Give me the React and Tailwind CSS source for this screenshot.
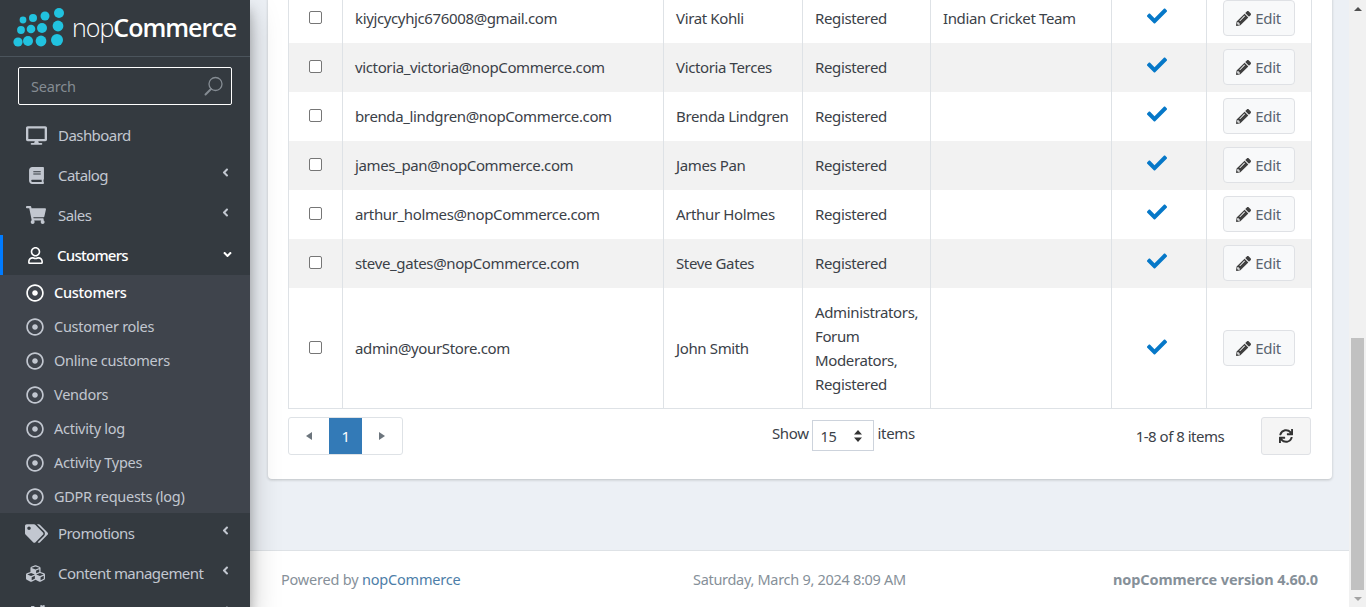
import {
  FaDesktop,
  FaBook,
  FaShoppingCart,
  FaRegUser,
  FaTags,
  FaCubes,
  FaCogs,
  FaAngleLeft,
  FaAngleDown,
  FaCheck,
  FaPencilAlt,
  FaSync,
  FaRegDotCircle,
} from "react-icons/fa";

const font = { fontFamily: '"Noto Sans", sans-serif' };

const customers = [
  { email: "kiyjcycyhjc676008@gmail.com", name: "Virat Kohli", roles: ["Registered"], company: "Indian Cricket Team" },
  { email: "victoria_victoria@nopCommerce.com", name: "Victoria Terces", roles: ["Registered"] },
  { email: "brenda_lindgren@nopCommerce.com", name: "Brenda Lindgren", roles: ["Registered"] },
  { email: "james_pan@nopCommerce.com", name: "James Pan", roles: ["Registered"] },
  { email: "arthur_holmes@nopCommerce.com", name: "Arthur Holmes", roles: ["Registered"] },
  { email: "steve_gates@nopCommerce.com", name: "Steve Gates", roles: ["Registered"] },
  {
    email: "admin@yourStore.com",
    name: "John Smith",
    roles: ["Administrators,", "Forum", "Moderators,", "Registered"],
  },
];

const subItems = ["Customers", "Customer roles", "Online customers", "Vendors", "Activity log", "Activity Types", "GDPR requests (log)"];

function Logo() {
  const dots = [
    [23, 20, 3.4], [33, 18, 4], [45, 16, 4.5], [59, 13, 5],
    [21, 30, 3.9], [31, 29, 4.3], [42, 28, 5], [58, 26, 5.4],
    [18, 42, 4.6], [28, 41, 5], [41, 41, 5.4], [57, 40, 6],
  ];
  return (
    <svg width="66" height="50" viewBox="0 3 66 50" className="shrink-0">
      {dots.map(([cx, cy, r], i) => (
        <ellipse key={i} cx={cx} cy={cy} rx={r} ry={r} fill="#21c2df" />
      ))}
    </svg>
  );
}

function NavItem({ icon: Icon, label, iconClass, arrow, active }) {
  return (
    <div className={`relative flex h-10 shrink-0 items-center pl-[26px] pr-[17px] ${active ? "text-white font-medium" : "text-[#c2c7d0]"}`}>
      {active && <div className="absolute left-0 top-0 h-10 w-[3px] bg-[#007bff]" />}
      <div className="flex w-[32px] shrink-0 items-center">
        <Icon className={iconClass} />
      </div>
      <span className={`flex-1 whitespace-nowrap text-[15px] ${active ? "-ml-[1px] tracking-[-0.75px]" : "tracking-[-0.55px]"}`}>{label}</span>
      {arrow === "left" && <FaAngleLeft className="text-[13px] -mt-[6px] mr-[1px]" />}
      {arrow === "down" && <FaAngleDown className="text-[13px] -mt-[1px] -mr-[1px]" />}
    </div>
  );
}

function Sidebar() {
  return (
    <aside className="z-10 flex h-full w-[250px] shrink-0 flex-col overflow-hidden bg-[#343a40] shadow-[0_14px_28px_rgba(0,0,0,0.25),0_10px_10px_rgba(0,0,0,0.22)]">
      <div className="flex h-[57px] shrink-0 items-center border-b border-[#4b545c]">
        <Logo />
        <span className="ml-[6px] whitespace-nowrap text-[25px] tracking-[-1px] text-white" style={{ fontFamily: '"Open Sans", sans-serif' }}>
          <span className="font-light">nop</span>
          <span className="font-semibold">Commerce</span>
        </span>
      </div>
      <div className="mx-[18px] mt-[10px] flex h-[38px] shrink-0 items-center justify-between rounded-[2px] border border-white pl-[12px] pr-[6px]">
        <span className="pt-[2px] text-[14.5px] tracking-[-0.2px] text-[#858c93]">Search</span>
        <svg width="22" height="22" viewBox="0 0 22 22" fill="none" stroke="#858c93">
          <circle cx="12.5" cy="9" r="6.5" strokeWidth="1.3" />
          <path d="M8 14 L2.5 19.5" strokeWidth="2" strokeLinecap="round" />
        </svg>
      </div>
      <div className="mt-[10px] flex flex-col">
        <NavItem icon={FaDesktop} iconClass="text-[21px] -ml-[0.5px]" label="Dashboard" />
        <NavItem icon={FaBook} iconClass="text-[17px] ml-[2px]" label="Catalog" arrow="left" />
        <NavItem icon={FaShoppingCart} iconClass="text-[20px]" label="Sales" arrow="left" />
        <NavItem icon={FaRegUser} iconClass="text-[17px] ml-[1px]" label="Customers" arrow="down" active />
      </div>
      <div className="flex h-[238px] shrink-0 flex-col bg-[#3f444c] pt-[1px]">
        {subItems.map((label, i) => (
          <div key={label} className={`flex h-[34px] shrink-0 items-center pl-[26px] ${i === 0 ? "font-medium text-white" : "text-[#c2c7d0]"}`}>
            <FaRegDotCircle className="w-[28px] shrink-0 pr-[10px] text-[18px]" />
            <span className="whitespace-nowrap text-[14.5px] tracking-[-0.27px]">{label}</span>
          </div>
        ))}
      </div>
      <div className="flex flex-col">
        <NavItem icon={FaTags} iconClass="text-[23px] -ml-[1px]" label="Promotions" arrow="left" />
        <NavItem icon={FaCubes} iconClass="text-[19px]" label="Content management" arrow="left" />
        <NavItem icon={FaCogs} iconClass="text-[20px]" label="Configuration" arrow="left" />
      </div>
    </aside>
  );
}

function EditButton({ tall }) {
  return (
    <button className={`flex h-[36px] w-[72px] items-center justify-center gap-[4px] rounded-[4px] border border-[#dfe1e5] bg-[#f8f9fa] text-[15px] text-[#5a6470] ${tall ? "" : "-mt-[1px]"}`}>
      <FaPencilAlt className="text-[15px] text-[#3f3f3f]" />
      Edit
    </button>
  );
}

function Row({ customer, striped, tall }) {
  const cell = "border-r border-[#dee2e6] flex items-center";
  return (
    <div
      className={`grid grid-cols-[54px_321px_139px_128px_181px_95px_1fr] text-[15px] tracking-[-0.37px] text-[#3b4148] ${tall ? "h-[120px]" : "h-[49px]"} ${striped ? "bg-[#f2f2f2]" : "bg-white"}`}
    >
      <div className={`${cell} justify-center pr-[1px]`}>
        <span className={`h-[13px] w-[13px] rounded-[2px] border border-[#767676] bg-white ${tall ? "-mt-[1px]" : "-mt-[3px]"}`} />
      </div>
      <div className={`${cell} pl-[12px] whitespace-nowrap`}>{customer.email}</div>
      <div className={`${cell} pl-[12px] whitespace-nowrap`}>{customer.name}</div>
      <div className={`${cell} pl-[12px]`}>
        <div className={tall ? "leading-[24px]" : ""}>
          {customer.roles.map((r) => (
            <div key={r}>{r}</div>
          ))}
        </div>
      </div>
      <div className={`${cell} pl-[12px] whitespace-nowrap`}>{customer.company}</div>
      <div className={`${cell} justify-center pr-[4px]`}>
        <FaCheck className={`text-[20px] text-[#0678c8] ${tall ? "-mt-[3px]" : "-mt-[5px]"}`} />
      </div>
      <div className="flex items-center justify-center pr-[1px]">
        <EditButton tall={tall} />
      </div>
    </div>
  );
}

function Pager() {
  return (
    <div className="flex h-[38px] w-[115px] items-center overflow-hidden rounded-[3px] border border-[#dee2e6] bg-white">
      <div className="flex h-full w-[40px] items-center justify-center">
        <span className="h-0 w-0 border-y-[4px] border-r-[6px] border-y-transparent border-r-[#6c757d]" />
      </div>
      <div className="flex h-full w-[33px] items-center justify-center bg-[#337ab7] text-[15px] text-white">1</div>
      <div className="flex h-full flex-1 items-center justify-center">
        <span className="h-0 w-0 border-y-[4px] border-l-[6px] border-y-transparent border-l-[#6c757d]" />
      </div>
    </div>
  );
}

export default function App() {
  return (
    <div className="flex h-[607px] w-[1366px] overflow-hidden bg-[#ecf0f5]" style={font}>
      <Sidebar />
      <div className="flex h-full min-w-0 flex-1 flex-col">
        <main className="flex-1 overflow-hidden pl-[18px] pr-[17px]">
          <div className="-mt-[6px] rounded-[4px] bg-white px-[20px] pb-[24px] shadow-[0_1px_3px_rgba(0,0,0,0.2)]">
            <div className="border-x border-b border-[#dee2e6]">
              {customers.map((c, i) => (
                <Row key={c.email} customer={c} striped={i % 2 === 1} tall={i === 6} />
              ))}
            </div>
            <div className="mt-[8px] flex h-[38px] items-start text-[15px] tracking-[-0.37px] text-[#3b4148]">
              <Pager />
              <div className="ml-[369px] flex items-start">
                <span className="mt-[5px]">Show</span>
                <div className="ml-[3px] mt-[3px] flex h-[31px] w-[62px] items-center justify-between border border-[#cdd3dc] pl-[8px] pr-[11px] text-[14.5px]">
                  <span className="mt-[2px]">15</span>
                  <svg width="8" height="12" viewBox="0 0 8 12" fill="#333">
                    <path d="M4 0 L8 4.5 H0 Z M4 12 L0 7.5 H8 Z" />
                  </svg>
                </div>
                <span className="ml-[4px] mt-[5px]">items</span>
              </div>
              <span className="ml-[221px] mt-[8px] whitespace-nowrap tracking-[-0.5px]">1-8 of 8 items</span>
              <div className="ml-auto mr-[1px] flex h-[38px] w-[50px] items-center justify-center rounded-[3px] border border-[#dfe1e5] bg-[#f5f5f5]">
                <FaSync className="text-[14px] text-[#333]" />
              </div>
            </div>
          </div>
        </main>
        <footer className="flex h-[57px] shrink-0 items-center border-t border-[#dee2e6] bg-white pl-[31px] pr-[31px] pt-[2px] text-[14.5px] tracking-[-0.3px] text-[#869099]">
          <div className="w-[412px] tracking-[-0.2px]">
            Powered by <span className="text-[#4d7ea8]">nopCommerce</span>
          </div>
          <div>Saturday, March 9, 2024 8:09 AM</div>
          <div className="ml-auto font-bold tracking-[-0.1px]">nopCommerce version 4.60.0</div>
        </footer>
      </div>
      <div className="flex h-full w-[17px] shrink-0 flex-col bg-[#f1f1f1]">
        <div className="flex h-[17px] items-center justify-center">
          <span className="h-0 w-0 border-x-[4px] border-b-[4px] border-x-transparent border-b-[#505050]" />
        </div>
        <div className="mt-[321px] ml-[2px] h-[252px] w-[13px] bg-[#c1c1c1]" />
        <div className="flex h-[17px] items-center justify-center">
          <span className="h-0 w-0 border-x-[4px] border-t-[4px] border-x-transparent border-t-[#a3a3a3]" />
        </div>
      </div>
    </div>
  );
}
